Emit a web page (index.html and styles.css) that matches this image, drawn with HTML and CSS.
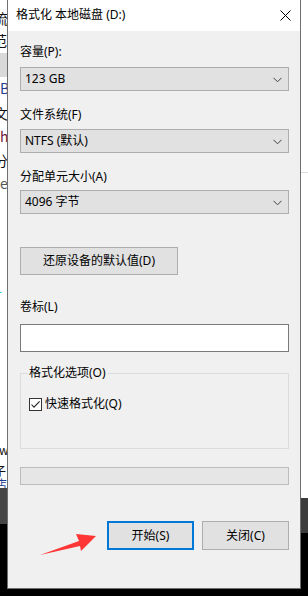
FILE: index.html
```html
<!DOCTYPE html>
<html lang="zh-CN">
<head>
<meta charset="utf-8">
<title>格式化 本地磁盘 (D:)</title>
<link rel="stylesheet" href="styles.css">
</head>
<body>
<div class="screen">
  <div class="bg-left">
    <div class="bg-paper">
      <div class="hl"></div>
      <div class="frag f1">流</div>
      <div class="frag f2">范</div>
      <div class="frag f3 blue">B2</div>
      <div class="frag f4">文</div>
      <div class="frag f5 plum">h</div>
      <div class="frag f6">分</div>
      <div class="frag f7 grey">e</div>
      <div class="frag f8 cyan">-</div>
      <div class="frag f9">ws</div>
      <div class="frag f10">子</div>
      <div class="frag f11 blue">店</div>
    </div>
    <div class="bg-bar"></div>
  </div>

  <div class="dlg">
    <div class="titlebar">
      <span class="title">格式化 本地磁盘 (D:)</span>
      <span class="close">
        <svg width="11" height="11" viewBox="0 0 11 11"><path d="M0.5 0.5L10.5 10.5M10.5 0.5L0.5 10.5" stroke="#000" stroke-width="1" fill="none"/></svg>
      </span>
    </div>
    <div class="content">
      <div class="label l1">容量(P):</div>
      <div class="combo c1"><span>123 GB</span><svg class="chev" width="9" height="6" viewBox="0 0 9 6"><path d="M0.5 0.8L4.5 4.8L8.5 0.8" stroke="#404040" stroke-width="1" fill="none"/></svg></div>
      <div class="label l2">文件系统(F)</div>
      <div class="combo c2"><span>NTFS (默认)</span><svg class="chev" width="9" height="6" viewBox="0 0 9 6"><path d="M0.5 0.8L4.5 4.8L8.5 0.8" stroke="#404040" stroke-width="1" fill="none"/></svg></div>
      <div class="label l3">分配单元大小(A)</div>
      <div class="combo c3"><span>4096 字节</span><svg class="chev" width="9" height="6" viewBox="0 0 9 6"><path d="M0.5 0.8L4.5 4.8L8.5 0.8" stroke="#404040" stroke-width="1" fill="none"/></svg></div>
      <div class="btn restore">还原设备的默认值(D)</div>
      <div class="label l4">卷标(L)</div>
      <div class="input"></div>
      <div class="group">
        <div class="legend">格式化选项(O)</div>
        <div class="check-row">
          <svg class="cb" width="13" height="13" viewBox="0 0 13 13"><rect x="0.5" y="0.5" width="12" height="12" fill="#fff" stroke="#333" stroke-width="1"/><path d="M2.5 6.5L5 9.2L10.6 3.3" stroke="#222" stroke-width="1.1" fill="none"/></svg>
          <span>快速格式化(Q)</span>
        </div>
      </div>
      <div class="progress"></div>
      <div class="actions">
        <div class="btn start">开始(S)</div>
        <div class="btn closebtn">关闭(C)</div>
      </div>
    </div>
  </div>

  <div class="bg-right">
    <div class="bg-paper r"><div class="rline"></div></div>
    <div class="bg-bar r"></div>
  </div>
</div>
<svg class="arrow" width="62" height="26" viewBox="36 530 62 26"><polygon points="40,555 79,541 76,534 96,536 81,551 80,546" fill="#ff3636"/></svg>
</body>
</html>
```
FILE: styles.css
```css
html, body {
  margin: 0;
  padding: 0;
}
body {
  width: 308px;
  height: 596px;
  background: #000;
  overflow: hidden;
  position: relative;
  font-family: "Noto Sans", "Noto Sans CJK SC", sans-serif;
  font-size: 12px;
  color: #000;
}
.screen {
  display: flex;
  align-items: flex-start;
  height: 596px;
}

/* background windows (free canvas behind the dialog) */
.bg-left, .bg-right {
  width: 7px;
  display: flex;
  flex-direction: column;
  overflow: hidden;
  flex-shrink: 0;
}
.bg-paper {
  background: #fff;
  height: 488px;
  position: relative;
  overflow: hidden;
}
.bg-paper.r { height: 498px; }
.bg-bar {
  background: #454545;
  height: 36px;
}
.bg-bar.r { height: 35px; background: #3c3c3c; }
.rline {
  margin-top: 172px;
  height: 1px;
  background: #dedede;
}
.hl {
  position: absolute;
  left: 0;
  top: 53px;
  width: 7px;
  height: 24px;
  background: #d9d9d9;
}
.frag {
  position: absolute;
  font-family: "Noto Sans CJK SC", sans-serif;
  font-size: 14px;
  line-height: 16px;
  white-space: nowrap;
  color: #111;
}
.f1 { top: 10px; left: -6px; }
.f2 { top: 32px; left: -7px; }
.f3 { top: 80px; left: 0; }
.f4 { top: 105px; left: -6px; }
.f5 { top: 128px; left: 0; }
.f6 { top: 152px; left: -6px; }
.f7 { top: 175px; left: 0; }
.f8 { top: 282px; left: -3px; }
.f9 { top: 443px; left: -1px; font-size: 12px; line-height: 14px; }
.f10 { top: 465px; left: -6px; font-size: 12px; line-height: 12px; }
.f11 { top: 478px; left: -5px; font-size: 12px; line-height: 12px; }
.blue { color: #1f3c8c; }
.plum { color: #6b1a3a; }
.grey { color: #555; }
.cyan { color: #22c4e0; }

/* dialog */
.dlg {
  width: 294px;
  height: 589px;
  flex-shrink: 0;
  box-sizing: border-box;
  background: #f0f0f0;
  border-left: 1px solid #6f6f6f;
  border-right: 1px solid #6f6f6f;
  border-bottom: 1px solid #6f6f6f;
  display: flex;
  flex-direction: column;
}
.titlebar {
  height: 31px;
  background: #fff;
  display: flex;
  align-items: center;
  justify-content: space-between;
  padding-left: 8px;
  flex-shrink: 0;
}
.title {
  font-size: 12px;
  line-height: 16px;
  margin-top: -1px;
}
.close {
  width: 30px;
  height: 31px;
  display: flex;
  align-items: center;
  justify-content: center;
}
.close svg { margin-top: -1px; }

.content {
  padding: 0 11px 0 12px;
  display: flex;
  flex-direction: column;
}
.label {
  height: 16px;
  line-height: 16px;
  white-space: nowrap;
}
.l1 { margin-top: 13px; }
.l2 { margin-top: 16px; }
.l3 { margin-top: 16px; }
.l4 { margin-top: 24px; }

.combo {
  height: 24px;
  box-sizing: border-box;
  background: #e1e1e1;
  border: 1px solid #adadad;
  display: flex;
  align-items: center;
  justify-content: space-between;
  padding: 0 6px 0 4px;
  line-height: 16px;
}
.c1 { margin-top: 7px; }
.c2 { margin-top: 6px; }
.c3 { margin-top: 5px; }
.chev { margin-top: 1px; }

.btn {
  box-sizing: border-box;
  background: #e1e1e1;
  border: 1px solid #adadad;
  display: flex;
  align-items: center;
  justify-content: center;
  line-height: 16px;
  white-space: nowrap;
}
.restore {
  margin-top: 33px;
  width: 158px;
  height: 28px;
}
.input {
  margin-top: 9px;
  height: 28px;
  box-sizing: border-box;
  background: #fff;
  border: 1px solid #7a7a7a;
}
.group {
  margin-top: 21px;
  height: 76px;
  box-sizing: border-box;
  border: 1px solid #dcdcdc;
  display: flex;
  flex-direction: column;
}
.legend {
  margin-top: -9px;
  margin-left: 7px;
  padding: 0 2px 0 1px;
  align-self: flex-start;
  background: #f0f0f0;
  line-height: 16px;
  height: 16px;
}
.check-row {
  margin-top: 15px;
  margin-left: 8px;
  display: flex;
  align-items: center;
  gap: 3px;
  line-height: 16px;
}
.progress {
  margin-top: 18px;
  height: 18px;
  box-sizing: border-box;
  background: #e6e6e6;
  border: 1px solid #bcbcbc;
}
.actions {
  margin-top: 36px;
  display: flex;
  justify-content: flex-end;
  gap: 8px;
}
.actions .btn {
  width: 87px;
  height: 29px;
}
.start {
  border: 2px solid #0078d7 !important;
}

.arrow {
  position: absolute;
  left: 36px;
  top: 530px;
}
```
